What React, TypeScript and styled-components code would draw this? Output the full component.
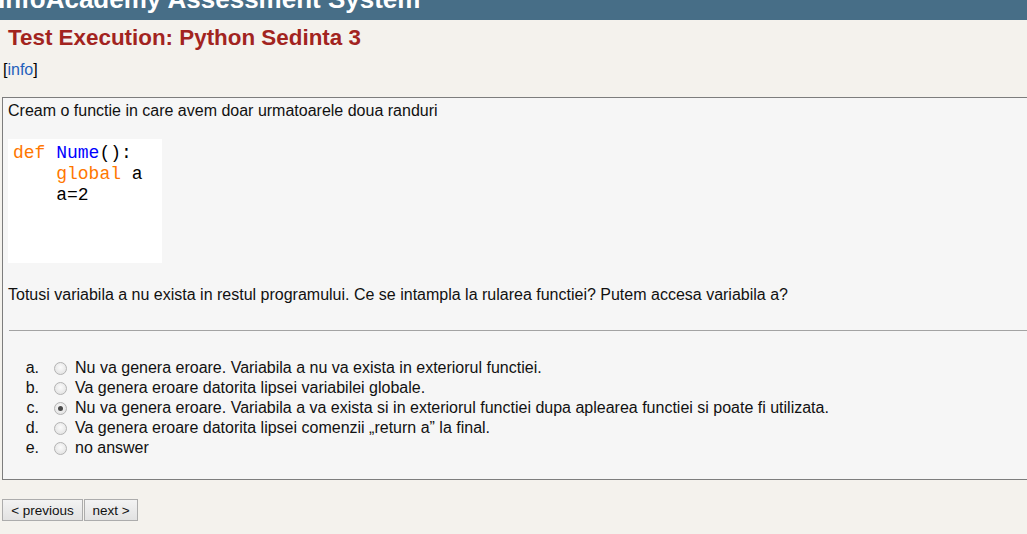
import React from "react";
import styled, { createGlobalStyle } from "styled-components";

const GlobalStyle = createGlobalStyle`
  html, body {
    margin: 0;
    padding: 0;
    background: #f4f2ed;
    overflow: hidden;
  }
  body {
    font-family: "Liberation Sans", Arial, sans-serif;
    font-size: 16px;
    color: #111;
  }
`;

const Page = styled.div`
  display: flex;
  flex-direction: column;
  width: 1027px;
  height: 534px;
  overflow: hidden;
`;

const Header = styled.header`
  height: 20px;
  background: #476e87;
  overflow: hidden;
  flex-shrink: 0;
`;

const SiteName = styled.h1`
  margin: -16px 0 0 -2px;
  font-size: 26px;
  line-height: 30px;
  font-weight: bold;
  color: #ffffff;
  white-space: nowrap;
`;

const PageTitle = styled.h2`
  margin: 5px 0 0 8px;
  font-size: 22.4px;
  line-height: 26px;
  font-weight: bold;
  color: #a2241f;
  white-space: nowrap;
`;

const InfoLine = styled.div`
  margin: 10px 0 0 3px;
  line-height: 18px;
  color: #000;
`;

const InfoLink = styled.a`
  color: #2360bb;
  text-decoration: none;
`;

const Panel = styled.section`
  margin: 18px 0 0 2px;
  width: 1080px;
  border: 1px solid #7d7d7d;
  background: #f6f6f6;
  padding: 4px 0 21px 0;
  box-sizing: border-box;
  flex-shrink: 0;
`;

const Text = styled.p<{ $top?: number }>`
  margin: ${(p) => p.$top ?? 0}px 0 0 5px;
  line-height: 18px;
  white-space: nowrap;
`;

const CodeBlock = styled.pre`
  margin: 19px 0 0 5px;
  width: 154px;
  height: 124px;
  box-sizing: border-box;
  padding: 4px 0 0 5px;
  background: #ffffff;
  font-family: "Liberation Mono", "Courier New", monospace;
  font-size: 18px;
  line-height: 21px;
  color: #000;
`;

const Keyword = styled.span`
  color: #ff7700;
`;

const FuncName = styled.span`
  color: #0000ff;
`;

const Rule = styled.hr`
  margin: 26px 0 0 6px;
  border: 0;
  border-top: 1px solid #a3a3a3;
  height: 0;
`;

const Options = styled.div`
  margin-top: 27px;
  display: flex;
  flex-direction: column;
`;

const OptionRow = styled.label`
  display: grid;
  grid-template-columns: 36px 13px auto;
  align-items: center;
  height: 20px;
  line-height: 20px;
  white-space: nowrap;
  cursor: pointer;
`;

const Letter = styled.span`
  text-align: right;
  color: #111;
`;

const Radio = styled.input`
  appearance: none;
  -webkit-appearance: none;
  margin: 0 0 0 15px;
  width: 13px;
  height: 13px;
  border-radius: 50%;
  border: 1px solid #b3b3b3;
  box-sizing: border-box;
  background: radial-gradient(circle at 50% 40%, #fbfbfb 0%, #e6e6e6 70%, #dcdcdc 100%);
  position: relative;

  &:checked::after {
    content: "";
    position: absolute;
    left: 3px;
    top: 3px;
    width: 5px;
    height: 5px;
    border-radius: 50%;
    background: #4a4a4a;
  }
`;

const OptionText = styled.span`
  margin-left: 23px;
  color: #111;
`;

const Nav = styled.nav`
  display: flex;
  gap: 1px;
  margin: 19px 0 0 2px;
`;

const NavButton = styled.button<{ $width: number }>`
  width: ${(p) => p.$width}px;
  height: 22px;
  padding: 0;
  font-family: "Liberation Sans", Arial, sans-serif;
  font-size: 13.5px;
  color: #111;
  background: linear-gradient(#f3f3f3, #e2e2e2);
  border: 1px solid #acacac;
  border-radius: 0;
  cursor: pointer;
`;

const options = [
  { letter: "a.", text: "Nu va genera eroare. Variabila a nu va exista in exteriorul functiei." },
  { letter: "b.", text: "Va genera eroare datorita lipsei variabilei globale." },
  {
    letter: "c.",
    text: "Nu va genera eroare. Variabila a va exista si in exteriorul functiei dupa aplearea functiei si poate fi utilizata.",
    checked: true,
  },
  { letter: "d.", text: "Va genera eroare datorita lipsei comenzii \u201Ereturn a\u201D la final." },
  { letter: "e.", text: "no answer" },
];

export default function App() {
  return (
    <>
      <GlobalStyle />
      <Page>
        <Header>
          <SiteName>InfoAcademy Assessment System</SiteName>
        </Header>
        <PageTitle>Test Execution: Python Sedinta 3</PageTitle>
        <InfoLine>
          [<InfoLink href="#">info</InfoLink>]
        </InfoLine>
        <Panel>
          <Text>Cream o functie in care avem doar urmatoarele doua randuri</Text>
          <CodeBlock>
            <Keyword>def</Keyword> <FuncName>Nume</FuncName>():{"\n"}
            {"    "}
            <Keyword>global</Keyword> a{"\n"}
            {"    "}a=2
          </CodeBlock>
          <Text $top={23}>
            Totusi variabila a nu exista in restul programului. Ce se intampla la rularea functiei? Putem accesa
            variabila a?
          </Text>
          <Rule />
          <Options>
            {options.map((o) => (
              <OptionRow key={o.letter}>
                <Letter>{o.letter}</Letter>
                <Radio type="radio" name="answer" defaultChecked={!!o.checked} />
                <OptionText>{o.text}</OptionText>
              </OptionRow>
            ))}
          </Options>
        </Panel>
        <Nav>
          <NavButton $width={81}>&lt; previous</NavButton>
          <NavButton $width={54}>next &gt;</NavButton>
        </Nav>
      </Page>
    </>
  );
}
